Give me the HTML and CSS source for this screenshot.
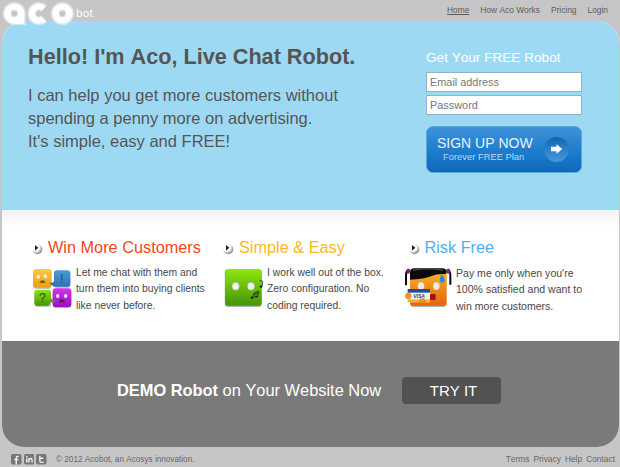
FILE: index.html
```html
<!DOCTYPE html>
<html lang="en">
<head>
<meta charset="utf-8">
<title>Acobot</title>
<link rel="stylesheet" href="styles.css">
</head>
<body>
<svg class="defs" width="0" height="0" aria-hidden="true">
  <defs>
    <linearGradient id="yellow" x2="0" y2="1"><stop stop-color="#fccb45"/><stop offset="1" stop-color="#eda010"/></linearGradient>
    <linearGradient id="blue" x2="0" y2="1"><stop stop-color="#4b9ad6"/><stop offset="1" stop-color="#2c74b8"/></linearGradient>
    <linearGradient id="green" x2="0" y2="1"><stop stop-color="#8ee60f"/><stop offset="1" stop-color="#449408"/></linearGradient>
    <linearGradient id="purple" x2="0" y2="1"><stop stop-color="#d432ee"/><stop offset="1" stop-color="#9b10bd"/></linearGradient>
    <linearGradient id="orange" x2="0" y2="1"><stop stop-color="#ffb72a"/><stop offset="1" stop-color="#e2630c"/></linearGradient>
    <radialGradient id="ball" cx=".35" cy=".3" r=".75"><stop stop-color="#fff"/><stop offset=".55" stop-color="#e8e8e8"/><stop offset="1" stop-color="#777"/></radialGradient>
    <symbol id="bullet" viewBox="0 0 36 36">
      <circle cx="16" cy="19" r="15" fill="url(#ball)"/>
      <circle cx="12" cy="14" r="11" fill="#fff"/>
      <path d="M9 6l10 8-10 9z" fill="#222"/>
    </symbol>
  </defs>
</svg>
<header class="top">
  <a class="logo">
    <svg width="75" height="26" viewBox="0 0 75 26" role="img" aria-label="aco">
      <g fill="none" stroke="#fff">
        <g stroke-width="9" opacity=".45">
          <circle cx="14.3" cy="13.6" r="7.2"/><path d="M21.5 13.6V25"/>
          <path d="M43.8 8.4A7.2 7.2 0 1 0 43.8 18.8"/>
          <circle cx="62.4" cy="13.6" r="7.2"/>
        </g>
        <g stroke-width="6.4">
          <circle cx="14.3" cy="13.6" r="7"/><path d="M21 13.6V23.8M14 20.6h8"/>
          <path d="M43.8 8.6A7 7 0 1 0 43.8 18.6"/>
          <circle cx="62.4" cy="13.6" r="7"/>
        </g>
      </g>
    </svg>
    <span class="logo-suffix">bot</span>
  </a>
  <nav class="nav"><a class="current">Home</a><a>How Aco Works</a><a>Pricing</a><a>Login</a></nav>
</header>

<main class="shell">
  <section class="hero">
    <div class="intro">
      <h1>Hello! I'm Aco, Live Chat Robot.</h1>
      <p>I can help you get more customers without<br>spending a penny more on advertising.<br>It's simple, easy and FREE!</p>
    </div>
    <form class="signup">
      <h2>Get Your FREE Robot</h2>
      <div class="field">Email address</div>
      <div class="field">Password</div>
      <div class="cta">
        <div class="cta-label"><span class="cta-main">SIGN UP NOW</span><span class="cta-sub">Forever FREE Plan</span></div>
        <div class="cta-arrow"><svg width="12" height="10" viewBox="0 0 12 10"><path d="M0 2.8h5.5V.2L11.3 5 5.5 9.8V7.2H0z" fill="#fff"/></svg></div>
      </div>
    </form>
  </section>

  <section class="features">
    <article class="feature">
      <h3 class="red"><svg class="bullet"><use href="#bullet"/></svg>Win More Customers</h3>
      <div class="feature-body">
        <svg width="42" height="42" viewBox="12 9 126 126">
          <g opacity=".3"><rect x="16" y="18" width="54" height="56" rx="9"/><rect x="78" y="23" width="49" height="48" rx="8"/><rect x="20" y="78" width="49" height="50" rx="8"/><rect x="74" y="76" width="56" height="56" rx="9"/></g>
          <rect x="15" y="15" width="56" height="55" rx="9" fill="url(#yellow)"/>
          <path d="M86 19h32q9 0 9 9v31q0 9-9 9H78L62 57q12 1 16-5V28q0-9 8-9z" fill="url(#blue)"/>
          <path d="M28 77h32q9 0 9 9v16q3 8 15 10-8 4-17 2-2 11-11 11H28q-9 0-9-9V86q0-9 9-9z" fill="url(#green)"/>
          <path d="M83 73h38q9 0 9 9v38q0 9-9 9H83q-9 0-9-9v-4l-9-7 9-2V82q0-9 9-9z" fill="url(#purple)"/>
          <path d="M69 102q3 8 15 10-8 5-17 2z" fill="#56a80b"/>
          <g fill="#e9f1f7"><ellipse cx="31" cy="38" rx="5" ry="6"/><ellipse cx="52" cy="37" rx="5" ry="6"/><ellipse cx="89" cy="96" rx="5" ry="6"/><ellipse cx="113" cy="96" rx="5" ry="6"/></g>
          <path d="M35 57q1-8 9-8t8 8z" fill="#8a5711"/><path d="M93 115q1-9 9-9t8 9z" fill="#5a1369"/>
          <text x="101" y="57" class="glyph" fill="#194f86">!</text><text x="43" y="113" class="glyph" fill="#1d5c0c">?</text>
        </svg>
        <p>Let me chat with them and<br>turn them into buying clients<br>like never before.</p>
      </div>
    </article>
    <article class="feature">
      <h3 class="gold"><svg class="bullet"><use href="#bullet"/></svg>Simple &amp; Easy</h3>
      <div class="feature-body">
        <svg width="42" height="42" viewBox="39 114 126 126">
          <rect x="45" y="124" width="110" height="110" rx="9" opacity=".3"/>
          <rect x="45" y="121" width="110" height="109" rx="9" fill="url(#green)" stroke="#68b714"/>
          <g fill="#e9f2f4" stroke="#66a51d"><ellipse cx="77" cy="172" rx="11" ry="12"/><ellipse cx="123" cy="172" rx="11" ry="12"/></g>
          <g fill="#222" stroke="#222" stroke-width="2.4"><path d="M129 205l4-14 14-4-5 15M131 197l14-5" fill="none"/><ellipse cx="126" cy="206" rx="4" ry="2"/><ellipse cx="139" cy="203" rx="4" ry="2"/><path d="M149 154l9 3-2 15" fill="none"/><ellipse cx="153" cy="173" rx="4" ry="2"/></g>
        </svg>
        <p>I work well out of the box.<br>Zero configuration. No<br>coding required.</p>
      </div>
    </article>
    <article class="feature wide-icon">
      <h3 class="sky"><svg class="bullet"><use href="#bullet"/></svg>Risk Free</h3>
      <div class="feature-body">
        <svg width="50" height="42" viewBox="27 114 150 126">
          <rect x="46" y="124" width="108" height="110" rx="9" opacity=".3"/>
          <rect x="45" y="120" width="110" height="110" rx="9" fill="url(#orange)"/>
          <path d="M45 152v-21q0-13 14-13h82q14 0 14 13l-4 4q-24-2-43 7t-63 10z" fill="#090909"/>
          <path d="M54 124q45-9 90 0" stroke="#4c4c4c" stroke-width="4" fill="none"/>
          <g fill="none" stroke="#0b0710" stroke-width="6"><path d="M45 125q-12-3-12 13v31M154 125q12-3 12 13v29"/></g>
          <g fill="#79238b"><rect x="35" y="119" width="9" height="15" rx="3"/><rect x="156" y="119" width="9" height="15" rx="3"/></g>
          <g fill="#e9edf0" stroke="#dc962a"><ellipse cx="78" cy="171" rx="10" ry="12"/><ellipse cx="124" cy="171" rx="10" ry="12"/></g>
          <path d="M140 136q12 15 8 22-6 6-12 0-4-7 4-22z" fill="#2588ed"/>
          <rect x="105" y="195" width="17" height="18" rx="4" fill="#9c160b"/>
          <rect x="38" y="180" width="67" height="40" rx="2" fill="#f6f6ee"/><path d="M38 180h67v11H38z" fill="#274b94"/><path d="M38 211h67v9H38z" fill="#f0b52c"/>
          <text x="72" y="207" class="visa">VISA</text>
          <g fill="#f19624" stroke="#c86f12"><circle cx="40" cy="201" r="9"/><path d="M72 220q1-12 10-12t9 12z"/></g>
        </svg>
        <p>Pay me only when you're<br>100% satisfied and want to<br>win more customers.</p>
      </div>
    </article>
  </section>

  <section class="demo">
    <div class="demo-text"><b>DEMO Robot</b> on Your Website Now</div>
    <div class="try">TRY IT</div>
  </section>
</main>

<footer class="bottom">
  <div class="social">
    <svg viewBox="0 0 30 30"><rect width="30" height="30" rx="5"/><path d="M22 7h-3q-4 0-4 4v19M9 16h12" /></svg>
    <svg viewBox="0 0 30 30"><rect width="30" height="30" rx="5"/><path d="M8 12v12M8 6v3M14 24V12M14 17q1-4 5-4 4 0 4 5v6"/></svg>
    <svg viewBox="0 0 30 30"><rect width="30" height="30" rx="5"/><path d="M11 5v14q0 5 5 5h6M11 12h10"/></svg>
  </div>
  <div class="copyright">© 2012 Acobot, an Acosys innovation.</div>
  <nav class="links"><a>Terms</a><a>Privacy</a><a>Help</a><a>Contact</a></nav>
</footer>
</body>
</html>
```
FILE: styles.css
```css
* { box-sizing: border-box; margin: 0; padding: 0; }
body {
  width: 620px; height: 467px; overflow: hidden;
  background: #c6c6c6; color: #555;
  font-family: "Liberation Sans", Arial, sans-serif;
  font-kerning: none;
}
.defs { position: absolute; }
svg { display: block; flex: none; }

.top { display: flex; justify-content: space-between; height: 21px; padding-right: 12px; }
.logo { display: flex; position: relative; z-index: 1; height: 27px; }
.logo-suffix { color: #fff; font-size: 11.5px; line-height: 14px; padding: 6px 0 0 1px; letter-spacing: .3px; }
.nav { display: flex; gap: 11px; font-size: 8.4px; line-height: 12px; padding-top: 4px; color: #5c5c5c; }
.current { text-decoration: underline; }

.shell { margin: 0 1px 0 2px; height: 426px; border-radius: 22px; overflow: hidden; background: #fff; }
.hero { display: flex; height: 189px; background: #9ed9f4; }
.intro { width: 398px; padding: 23px 0 0 26px; }
h1 { font-size: 21.65px; line-height: 26px; color: #555; white-space: nowrap; }
.intro p { margin-top: 14px; font-size: 16.5px; line-height: 23px; white-space: nowrap; }
.signup { width: 156px; margin-left: 26px; padding-top: 27px; }
.signup h2 { font-size: 13.6px; line-height: 20px; font-weight: 400; color: #fff; margin-bottom: 4px; white-space: nowrap; }
.field { height: 20px; margin-bottom: 3px; border: 1px solid #8fb2cc; background: #fff; color: #777; font-size: 10.9px; line-height: 19px; padding-left: 3px; }
.cta { display: flex; align-items: center; justify-content: space-between; height: 47px; margin-top: 11px; padding: 0 12px 1px 10px; border: 1px solid #58a9de; border-radius: 7px; background: linear-gradient(#3f92d8, #1b7acb 60%, #0f68b9); color: #e6f4ff; }
.cta-label { display: flex; flex-direction: column; }
.cta-main { font-size: 14px; line-height: 15px; }
.cta-sub { padding-left: 6px; font-size: 9.4px; line-height: 12px; color: #b4dcfa; }
.cta-arrow { display: flex; align-items: center; justify-content: center; width: 25px; height: 25px; border-radius: 50%; background: linear-gradient(#1265b2, #459ade); }

.features { display: grid; grid-template-columns: 191px 181px 1fr; height: 131px; padding: 26px 0 0 30px; border-top: 1px solid #eaf7fd; background: linear-gradient(#f3f3f3, #fff 16px); }
h3 { display: flex; align-items: center; gap: 4px; font-size: 16.3px; line-height: 20px; font-weight: 400; white-space: nowrap; }
.bullet { width: 12px; height: 12px; margin-top: 3px; }
.red { color: #f2481c; }
.gold { color: #fbb724; }
.sky { color: #51aef3; }
.feature-body { display: flex; gap: 2px; margin-top: 10px; }
.feature-body p { font-size: 10.35px; line-height: 16.4px; white-space: nowrap; margin-top: -2px; color: #484848; }
.wide-icon h3 { padding-left: 4.5px; }
.wide-icon p { font-size: 10.55px; }
.glyph { font-size: 37px; text-anchor: middle; }
.visa { font-size: 15px; font-weight: 700; font-style: italic; text-anchor: middle; fill: #263e84; }

.demo { display: flex; align-items: center; height: 106px; padding: 0 0 7px 115px; background: #7a7a7a; color: #fff; }
.demo-text { width: 285px; font-size: 16.4px; white-space: nowrap; }
.try { width: 99px; height: 27px; border-radius: 4px; background: #525252; font-size: 15px; line-height: 28px; text-align: center; padding-left: 4px; }

.bottom { display: flex; height: 20px; padding: 0 5px 0 11px; font-size: 8.2px; line-height: 10px; color: #666; }
.social { display: flex; gap: 2px; padding-top: 7px; width: 45px; }
.social svg { width: 10.5px; height: 10.5px; fill: #777; }
.social path { fill: none; stroke: #f2f2f2; stroke-width: 4; }
.copyright { padding-top: 8px; }
.links { display: flex; gap: 4px; margin-left: auto; padding-top: 7px; font-size: 8.4px; }
```
